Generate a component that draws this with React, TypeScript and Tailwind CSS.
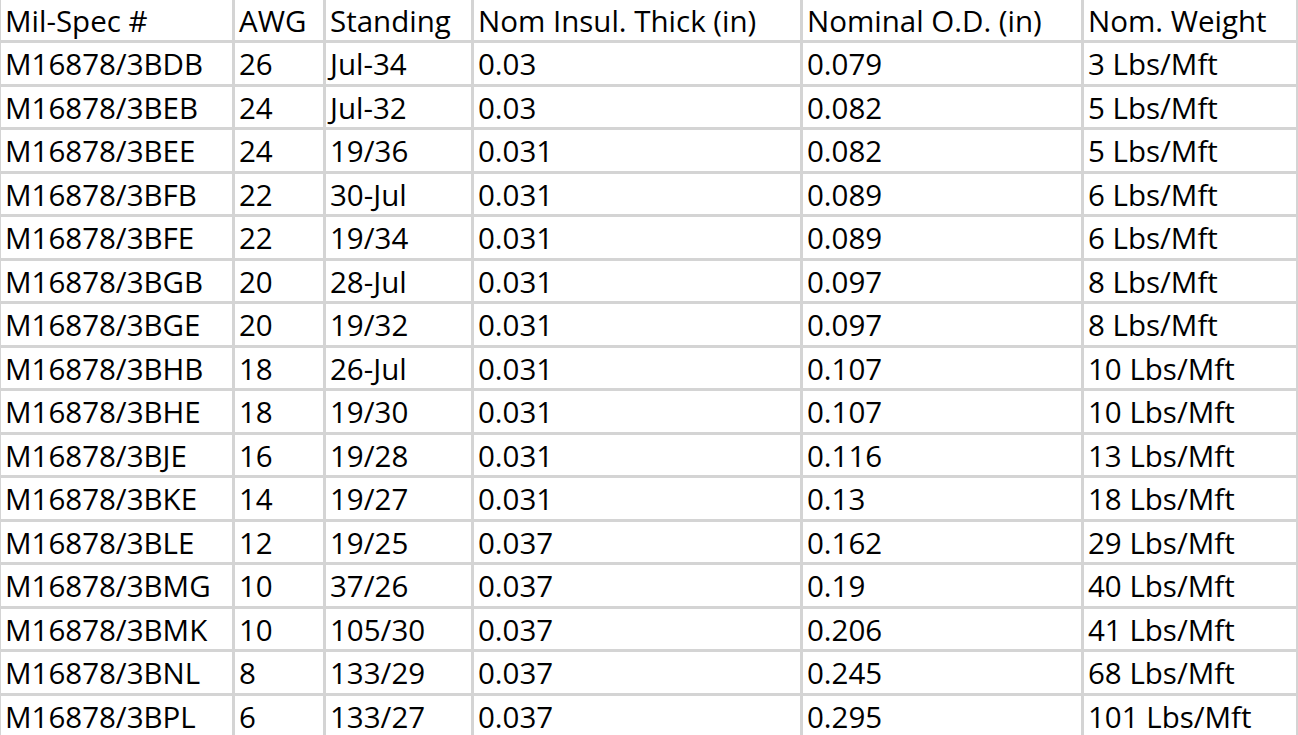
import React from "react";

const header = ["Mil-Spec #", "AWG", "Standing", "Nom Insul. Thick (in)", "Nominal O.D. (in)", "Nom. Weight"];

const rows: string[][] = [
  ["M16878/3BDB", "26", "Jul-34", "0.03", "0.079", "3 Lbs/Mft"],
  ["M16878/3BEB", "24", "Jul-32", "0.03", "0.082", "5 Lbs/Mft"],
  ["M16878/3BEE", "24", "19/36", "0.031", "0.082", "5 Lbs/Mft"],
  ["M16878/3BFB", "22", "30-Jul", "0.031", "0.089", "6 Lbs/Mft"],
  ["M16878/3BFE", "22", "19/34", "0.031", "0.089", "6 Lbs/Mft"],
  ["M16878/3BGB", "20", "28-Jul", "0.031", "0.097", "8 Lbs/Mft"],
  ["M16878/3BGE", "20", "19/32", "0.031", "0.097", "8 Lbs/Mft"],
  ["M16878/3BHB", "18", "26-Jul", "0.031", "0.107", "10 Lbs/Mft"],
  ["M16878/3BHE", "18", "19/30", "0.031", "0.107", "10 Lbs/Mft"],
  ["M16878/3BJE", "16", "19/28", "0.031", "0.116", "13 Lbs/Mft"],
  ["M16878/3BKE", "14", "19/27", "0.031", "0.13", "18 Lbs/Mft"],
  ["M16878/3BLE", "12", "19/25", "0.037", "0.162", "29 Lbs/Mft"],
  ["M16878/3BMG", "10", "37/26", "0.037", "0.19", "40 Lbs/Mft"],
  ["M16878/3BMK", "10", "105/30", "0.037", "0.206", "41 Lbs/Mft"],
  ["M16878/3BNL", "8", "133/29", "0.037", "0.245", "68 Lbs/Mft"],
  ["M16878/3BPL", "6", "133/27", "0.037", "0.295", "101 Lbs/Mft"],
];

export default function App() {
  const all = [header, ...rows];
  return (
    <div className="w-[1298px] h-[735px] overflow-hidden bg-[#d4d4d4]">
      <div
        className="grid pl-[1px] gap-[3px] grid-cols-[231px_88px_145px_326px_278px_212px] grid-rows-[40px_repeat(16,40.53px)] text-black text-[29.5px] leading-none"
        style={{ fontFamily: '"Open Sans", "Noto Sans", sans-serif' }}
      >
        {all.map((r, i) =>
          r.map((c, j) => (
            <div
              key={`${i}-${j}`}
              className="bg-white flex items-center pl-[4px] pt-[1px] whitespace-nowrap overflow-hidden"
            >
              {c}
            </div>
          ))
        )}
      </div>
    </div>
  );
}
